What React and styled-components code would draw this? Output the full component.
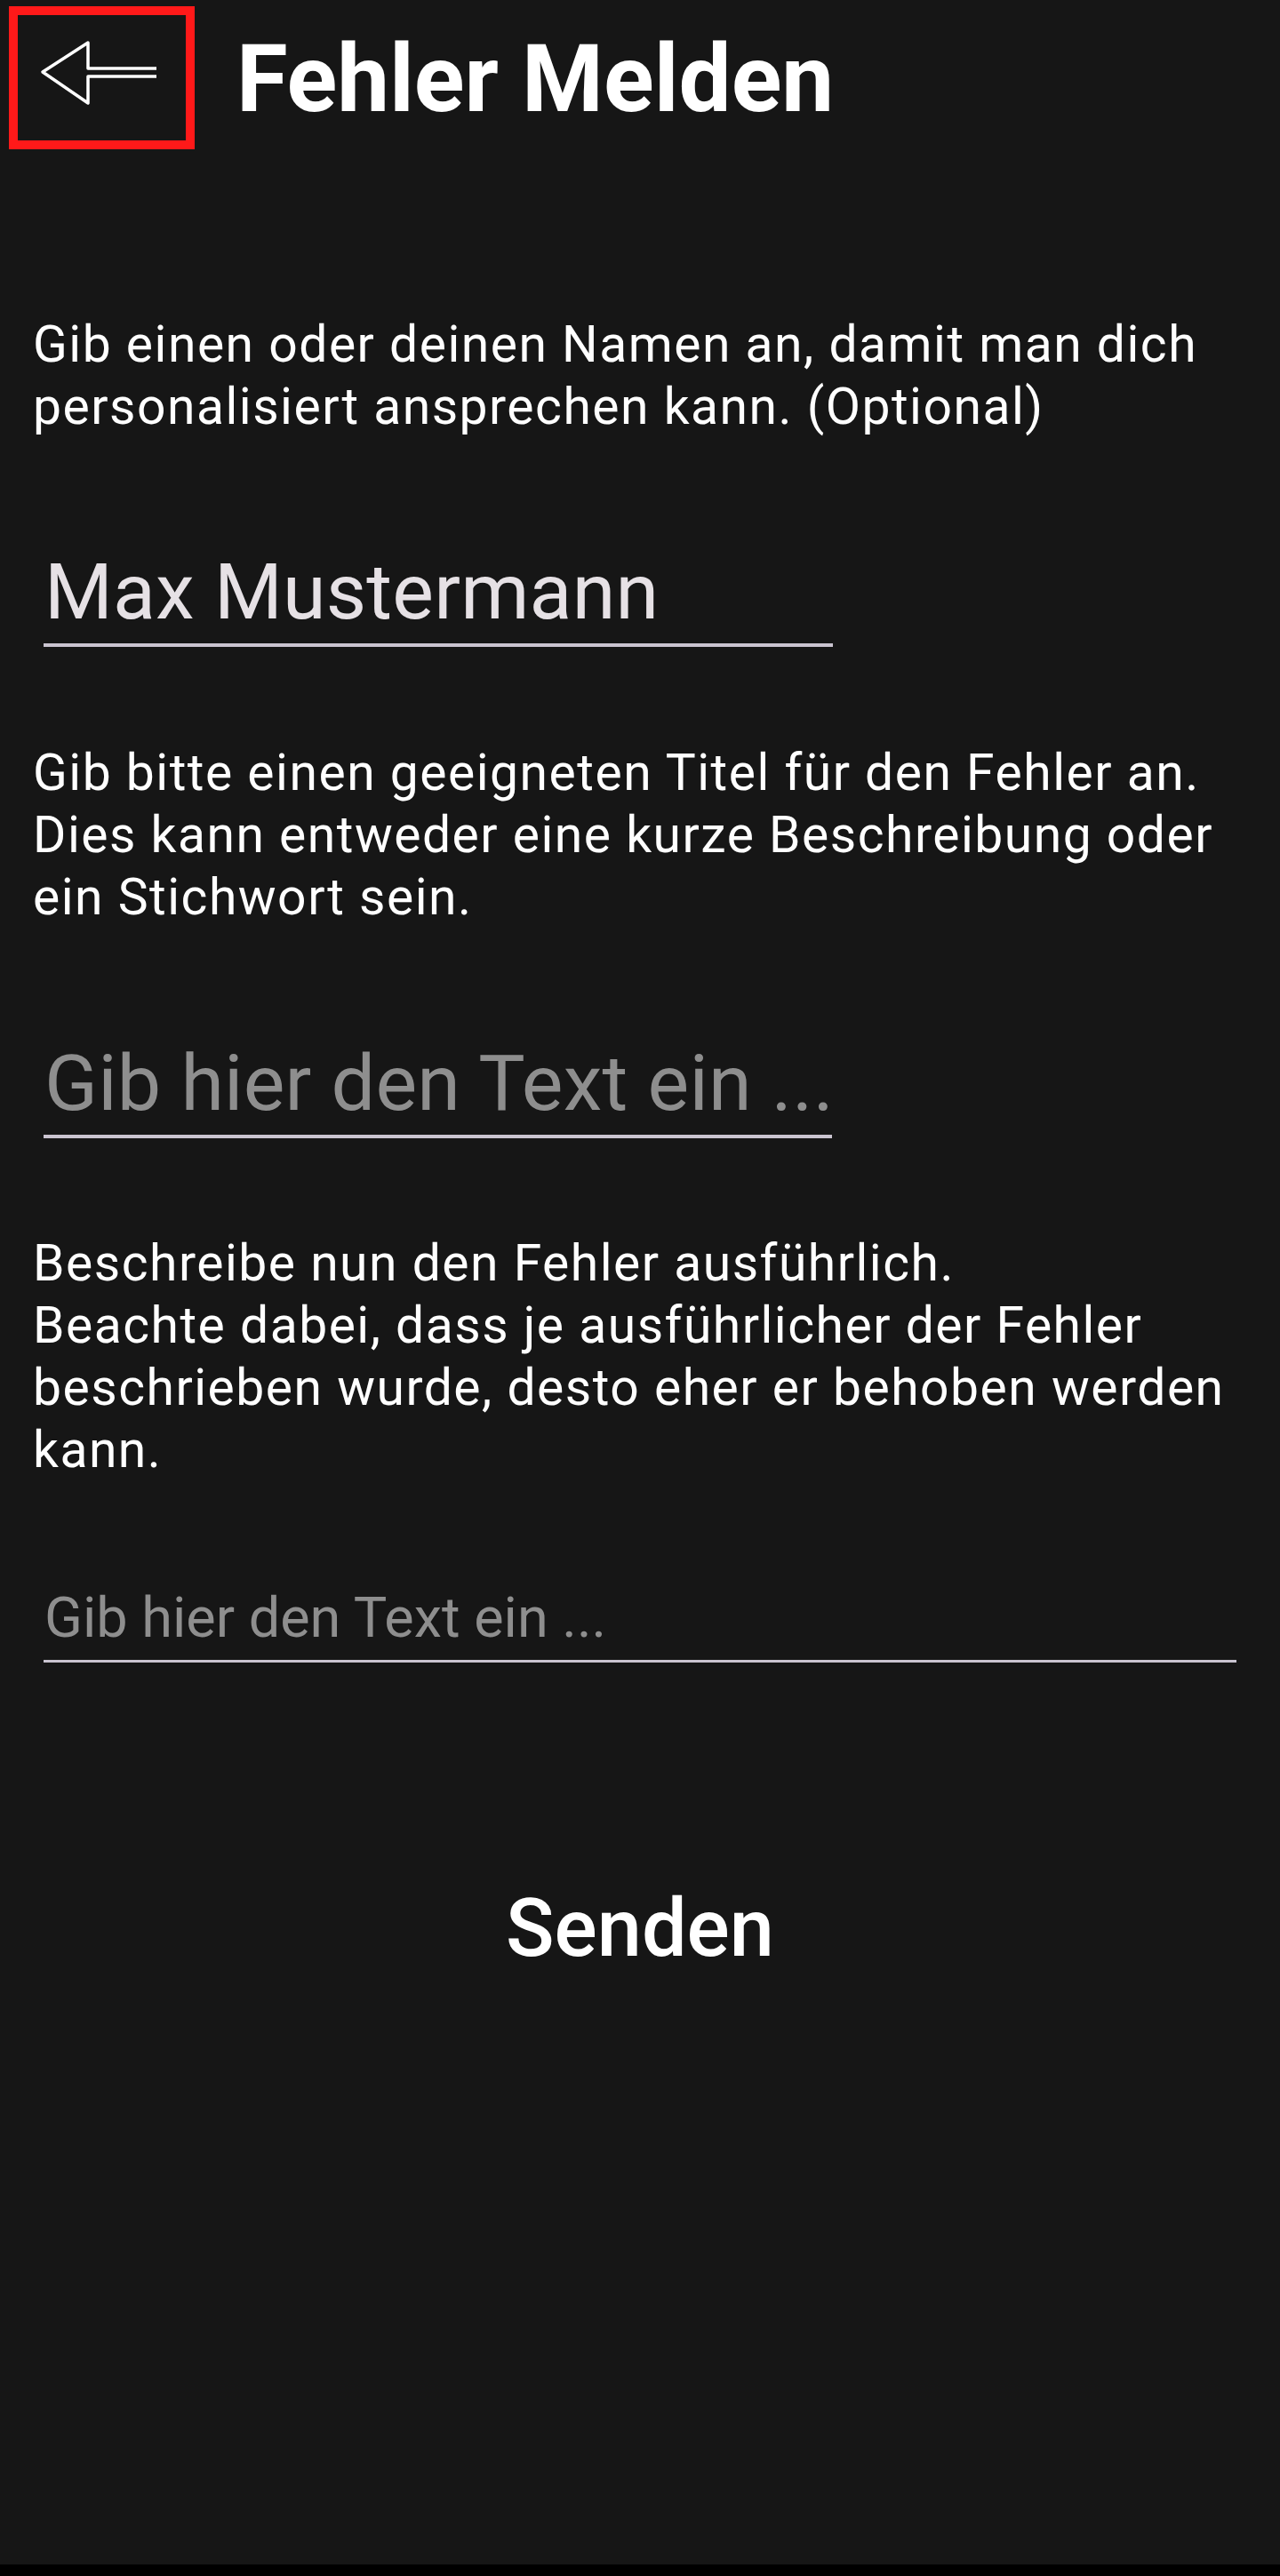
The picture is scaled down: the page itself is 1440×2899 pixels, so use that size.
import React, { useState } from "react";
import styled, { createGlobalStyle } from "styled-components";

const GlobalStyle = createGlobalStyle`
  html, body {
    margin: 0;
    padding: 0;
    background: #000000;
  }
  body {
    font-family: Roboto, "Noto Sans", "Liberation Sans", sans-serif;
    -webkit-font-smoothing: antialiased;
  }
`;

const Screen = styled.div`
  min-height: 2886px;
  background: #161616;
  display: flex;
  flex-direction: column;
  color: #ffffff;
`;

const Header = styled.header`
  display: flex;
  align-items: flex-start;
  padding: 7px 0 0 10px;
`;

const BackButton = styled.button`
  width: 209px;
  height: 161px;
  box-sizing: border-box;
  border: 10px solid #ff1919;
  background: transparent;
  padding: 0;
  margin: 0;
  cursor: pointer;
  display: flex;
  flex-shrink: 0;

  svg {
    width: 100%;
    height: 100%;
  }
`;

const Title = styled.h1`
  margin: 13px 0 0 47px;
  font-size: 105px;
  line-height: 140px;
  font-weight: 700;
  color: #ffffff;
`;

const Form = styled.form`
  display: flex;
  flex-direction: column;
  padding: 0 37px;
`;

const Hint = styled.p`
  margin: ${(p) => p.$top}px 0 0 0;
  font-size: 57px;
  line-height: 70px;
  font-weight: 400;
  letter-spacing: 1.5px;
  color: #ffffff;
`;

const LineInput = styled.input`
  margin: ${(p) => p.$top}px 0 0 12px;
  width: ${(p) => p.$width}px;
  height: 118px;
  box-sizing: content-box;
  padding: 0 0 0 1px;
  border: none;
  border-bottom: 4px solid #cac4d0;
  background: transparent;
  outline: none;
  font-family: Roboto, "Noto Sans", "Liberation Sans", sans-serif;
  font-size: 88px;
  font-weight: 400;
  letter-spacing: 0.2px;
  color: #e6e1e5;

  &::placeholder {
    color: #8e8e8e;
    opacity: 1;
  }
`;

const LineArea = styled.textarea`
  margin: ${(p) => p.$top}px 12px 0 12px;
  height: 84px;
  box-sizing: content-box;
  padding: 9px 0 0 1px;
  border: none;
  border-bottom: 3px solid #cac4d0;
  background: transparent;
  outline: none;
  resize: none;
  overflow: hidden;
  font-family: Roboto, "Noto Sans", "Liberation Sans", sans-serif;
  font-size: 63px;
  line-height: 74px;
  color: #e6e1e5;

  &::placeholder {
    color: #8e8e8e;
    opacity: 1;
  }
`;

const SendButton = styled.button`
  align-self: center;
  margin-top: 247px;
  padding: 0;
  border: none;
  background: transparent;
  font-family: Roboto, "Noto Sans", "Liberation Sans", sans-serif;
  font-size: 90px;
  font-weight: 500;
  color: #ffffff;
  cursor: pointer;
`;

function BackArrow() {
  return (
    <svg viewBox="0 0 189 141" fill="none">
      <path
        d="M156 60 H79 V31 L28 64 L79 99 V69 H156"
        stroke="#ffffff"
        strokeWidth="3.5"
        strokeLinejoin="round"
      />
    </svg>
  );
}

const App = () => {
  const [name, setName] = useState("Max Mustermann");
  const [title, setTitle] = useState("");
  const [text, setText] = useState("");

  return (
    <Screen>
      <GlobalStyle />
      <Header>
        <BackButton type="button" aria-label="Zurück">
          <BackArrow />
        </BackButton>
        <Title>Fehler Melden</Title>
      </Header>
      <Form onSubmit={(e) => e.preventDefault()}>
        <Hint $top={185}>
          Gib einen oder deinen Namen an, damit man dich personalisiert
          ansprechen kann. (Optional)
        </Hint>
        <LineInput
          $top={113}
          $width={887}
          value={name}
          onChange={({ target: { value } }) => setName(value)}
        />
        <Hint $top={107}>
          Gib bitte einen geeigneten Titel für den Fehler an.
          <br />
          Dies kann entweder eine kurze Beschreibung oder ein Stichwort sein.
        </Hint>
        <LineInput
          $top={114}
          $width={886}
          placeholder="Gib hier den Text ein ..."
          value={title}
          onChange={({ target: { value } }) => setTitle(value)}
        />
        <Hint $top={106}>
          Beschreibe nun den Fehler ausführlich.
          <br />
          Beachte dabei, dass je ausführlicher der Fehler beschrieben wurde,
          desto eher er behoben werden kann.
        </Hint>
        <LineArea
          $top={108}
          rows={1}
          placeholder="Gib hier den Text ein ..."
          value={text}
          onChange={({ target: { value } }) => setText(value)}
        />
        <SendButton type="submit">Senden</SendButton>
      </Form>
    </Screen>
  );
};

export default App;
